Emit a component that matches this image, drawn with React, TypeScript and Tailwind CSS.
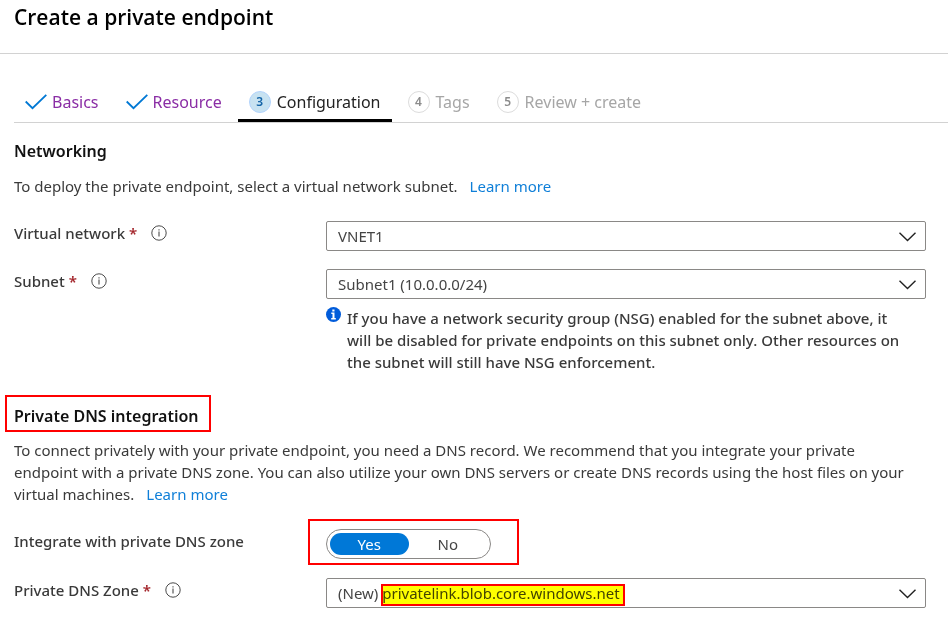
import { useState } from "react";
import type { ReactNode } from "react";

function CheckMark() {
  return (
    <svg className="h-4 w-[22px]" viewBox="0 0 22 16" fill="none" stroke="#0078d4" strokeWidth="1.8" aria-hidden="true">
      <path d="M0.7 7.5 L7.5 14.2 L21.3 0.8" />
    </svg>
  );
}

function InfoOutline() {
  return (
    <svg className="size-4" viewBox="0 0 16 16" fill="none" stroke="#4a4a4a" aria-hidden="true">
      <circle cx="8" cy="8" r="7.2" strokeWidth="1" />
      <path d="M8 6.5 V11.5 M8 4.2 V5.4" strokeWidth="1.1" />
    </svg>
  );
}

function InfoSolid() {
  return (
    <svg className="size-[15px] shrink-0" viewBox="0 0 15 15" aria-hidden="true">
      <circle cx="7.5" cy="7.5" r="7.5" fill="#015cda" />
      <path d="M6.3 2.5h2.2v2H6.3z M5.3 5.6h3.2v5.4h1.3v1.4H5.2V11h1.3V7H5.3z" fill="#fff" />
    </svg>
  );
}

function Step({ label, number, state }: { label: string; number: number; state: "done" | "current" | "todo" }) {
  if (state === "done") {
    return (
      <button type="button" className="flex h-10 items-center gap-[5px] px-[11px] text-[#8a2da5]">
        <CheckMark />
        {label}
      </button>
    );
  }
  const current = state === "current";
  return (
    <button
      type="button"
      aria-current={current ? "step" : undefined}
      className={
        current
          ? "flex h-10 items-center gap-[6px] border-b-3 border-black px-[11px] pt-[3px] text-[#222]"
          : "flex h-10 items-center gap-[6px] px-[11px] text-[#a6a6a6]"
      }
    >
      <span
        className={
          current
            ? "flex size-[22px] items-center justify-center rounded-full border border-[#b3d4fc] bg-[#c7e2f1] text-xs font-semibold text-[#1565a8]"
            : "flex size-[22px] items-center justify-center rounded-full border border-[#dcdcdc] text-xs font-semibold text-[#8c8c8c]"
        }
      >
        {number}
      </span>
      {label}
    </button>
  );
}

function FieldLabel({ htmlFor, children }: { htmlFor: string; children: ReactNode }) {
  return (
    <div className="flex h-6 w-[312px] shrink-0 items-center gap-[14px]">
      <label htmlFor={htmlFor} className="font-medium">
        {children} <span className="font-semibold text-[#a4262c]">*</span>
      </label>
      <InfoOutline />
    </div>
  );
}

function Dropdown({ id, value, children }: { id: string; value: string; children?: ReactNode }) {
  return (
    <div className="relative">
      <select
        id={id}
        className="block h-[30px] w-full appearance-none rounded-xs border border-[#8a8886] bg-white px-[11px] text-[15px] text-[#444]"
      >
        <option>{value}</option>
      </select>
      {children}
      <svg
        className="pointer-events-none absolute top-[11px] right-[10px] h-[10px] w-[17px]"
        viewBox="0 0 17 10"
        fill="none"
        stroke="#222"
        strokeWidth="1.4"
        aria-hidden="true"
      >
        <path d="M0.5 0.8 L8.5 8.6 L16.5 0.8" />
      </svg>
    </div>
  );
}

function LearnMore() {
  return (
    <a href="#learn" className="ml-3 text-[#0f7fd8]">
      Learn more
    </a>
  );
}

export default function App() {
  const [integrate, setIntegrate] = useState(true);
  const options: [string, boolean][] = [
    ["Yes", true],
    ["No", false],
  ];

  return (
    <div className="min-h-screen bg-white pb-6 font-['Noto_Sans','Open_Sans',sans-serif] text-[15px] leading-[22px] text-[#3a3a3a]">
      <header className="h-[54px] border-b border-[#d2d2d2] px-[14px] pt-[3px]">
        <h1 className="font-['Open_Sans','Noto_Sans',sans-serif] text-[21px] leading-7 font-semibold text-black">
          Create a private endpoint
        </h1>
      </header>

      <main className="pl-[14px]">
        <nav aria-label="Steps" className="mt-7 flex h-[41px] gap-[5px] border-b border-[#d2d2d2] text-base">
          <Step number={1} label="Basics" state="done" />
          <Step number={2} label="Resource" state="done" />
          <Step number={3} label="Configuration" state="current" />
          <Step number={4} label="Tags" state="todo" />
          <Step number={5} label="Review + create" state="todo" />
        </nav>

        <div className="pr-[22px]">
          <section>
            <h2 className="pt-[17px] text-base leading-[22px] font-semibold text-[#111]">Networking</h2>
            <p className="mt-[13px]">
              To deploy the private endpoint, select a virtual network subnet.
              <LearnMore />
            </p>

            <div className="mt-6 flex">
              <FieldLabel htmlFor="vnet">Virtual network</FieldLabel>
              <div className="min-w-0 flex-1">
                <Dropdown id="vnet" value="VNET1" />
              </div>
            </div>

            <div className="mt-[18px] flex">
              <FieldLabel htmlFor="subnet">Subnet</FieldLabel>
              <div className="min-w-0 flex-1">
                <Dropdown id="subnet" value="Subnet1 (10.0.0.0/24)" />
                <div className="mt-2 flex gap-[6px] pr-[14px]">
                  <InfoSolid />
                  <p className="font-medium">
                    If you have a network security group (NSG) enabled for the subnet above, it will be disabled for
                    private endpoints on this subnet only. Other resources on the subnet will still have NSG
                    enforcement.
                  </p>
                </div>
              </div>
            </div>
          </section>

          <section className="mt-[22px]">
            <h2 className="-ml-[9px] inline-block border-2 border-[#f00] pt-2 pr-[10px] pb-[2px] pl-[7px] text-base leading-[23px] font-semibold text-[#111]">
              Private DNS integration
            </h2>
            <p className="mt-[7px] pr-2">
              To connect privately with your private endpoint, you need a DNS record. We recommend that you integrate
              your private endpoint with a private DNS zone. You can also utilize your own DNS servers or create DNS
              records using the host files on your virtual machines.
              <LearnMore />
            </p>

            <div role="radiogroup" aria-labelledby="integrate-label" className="mt-[14px] flex">
              <div id="integrate-label" className="w-[294px] shrink-0 pt-[11px] font-medium">
                Integrate with private DNS zone
              </div>
              <div className="border-2 border-[#f00] pt-2 pr-[26px] pb-1 pl-4">
                <div className="flex h-[30px] w-[165px] rounded-full border border-[#8a8886] p-[3px]">
                  {options.map(([label, value]) => (
                    <label
                      key={label}
                      className={
                        integrate === value
                          ? "flex flex-1 items-center justify-center rounded-full bg-[#0078d7] text-white"
                          : "flex flex-1 items-center justify-center rounded-full text-[#444]"
                      }
                    >
                      <input
                        type="radio"
                        name="integrate"
                        className="sr-only"
                        checked={integrate === value}
                        onChange={() => setIntegrate(value)}
                      />
                      {label}
                    </label>
                  ))}
                </div>
              </div>
            </div>

            <div className="mt-[13px] flex">
              <FieldLabel htmlFor="zone">Private DNS Zone</FieldLabel>
              <div className="min-w-0 flex-1">
                <Dropdown id="zone" value="(New) privatelink.blob.core.windows.net">
                  <div className="pointer-events-none absolute top-[6px] left-[55px] h-[22px] w-[244px] border-2 border-[#f00] bg-[#ff0] mix-blend-multiply" />
                </Dropdown>
              </div>
            </div>
          </section>
        </div>
      </main>
    </div>
  );
}
